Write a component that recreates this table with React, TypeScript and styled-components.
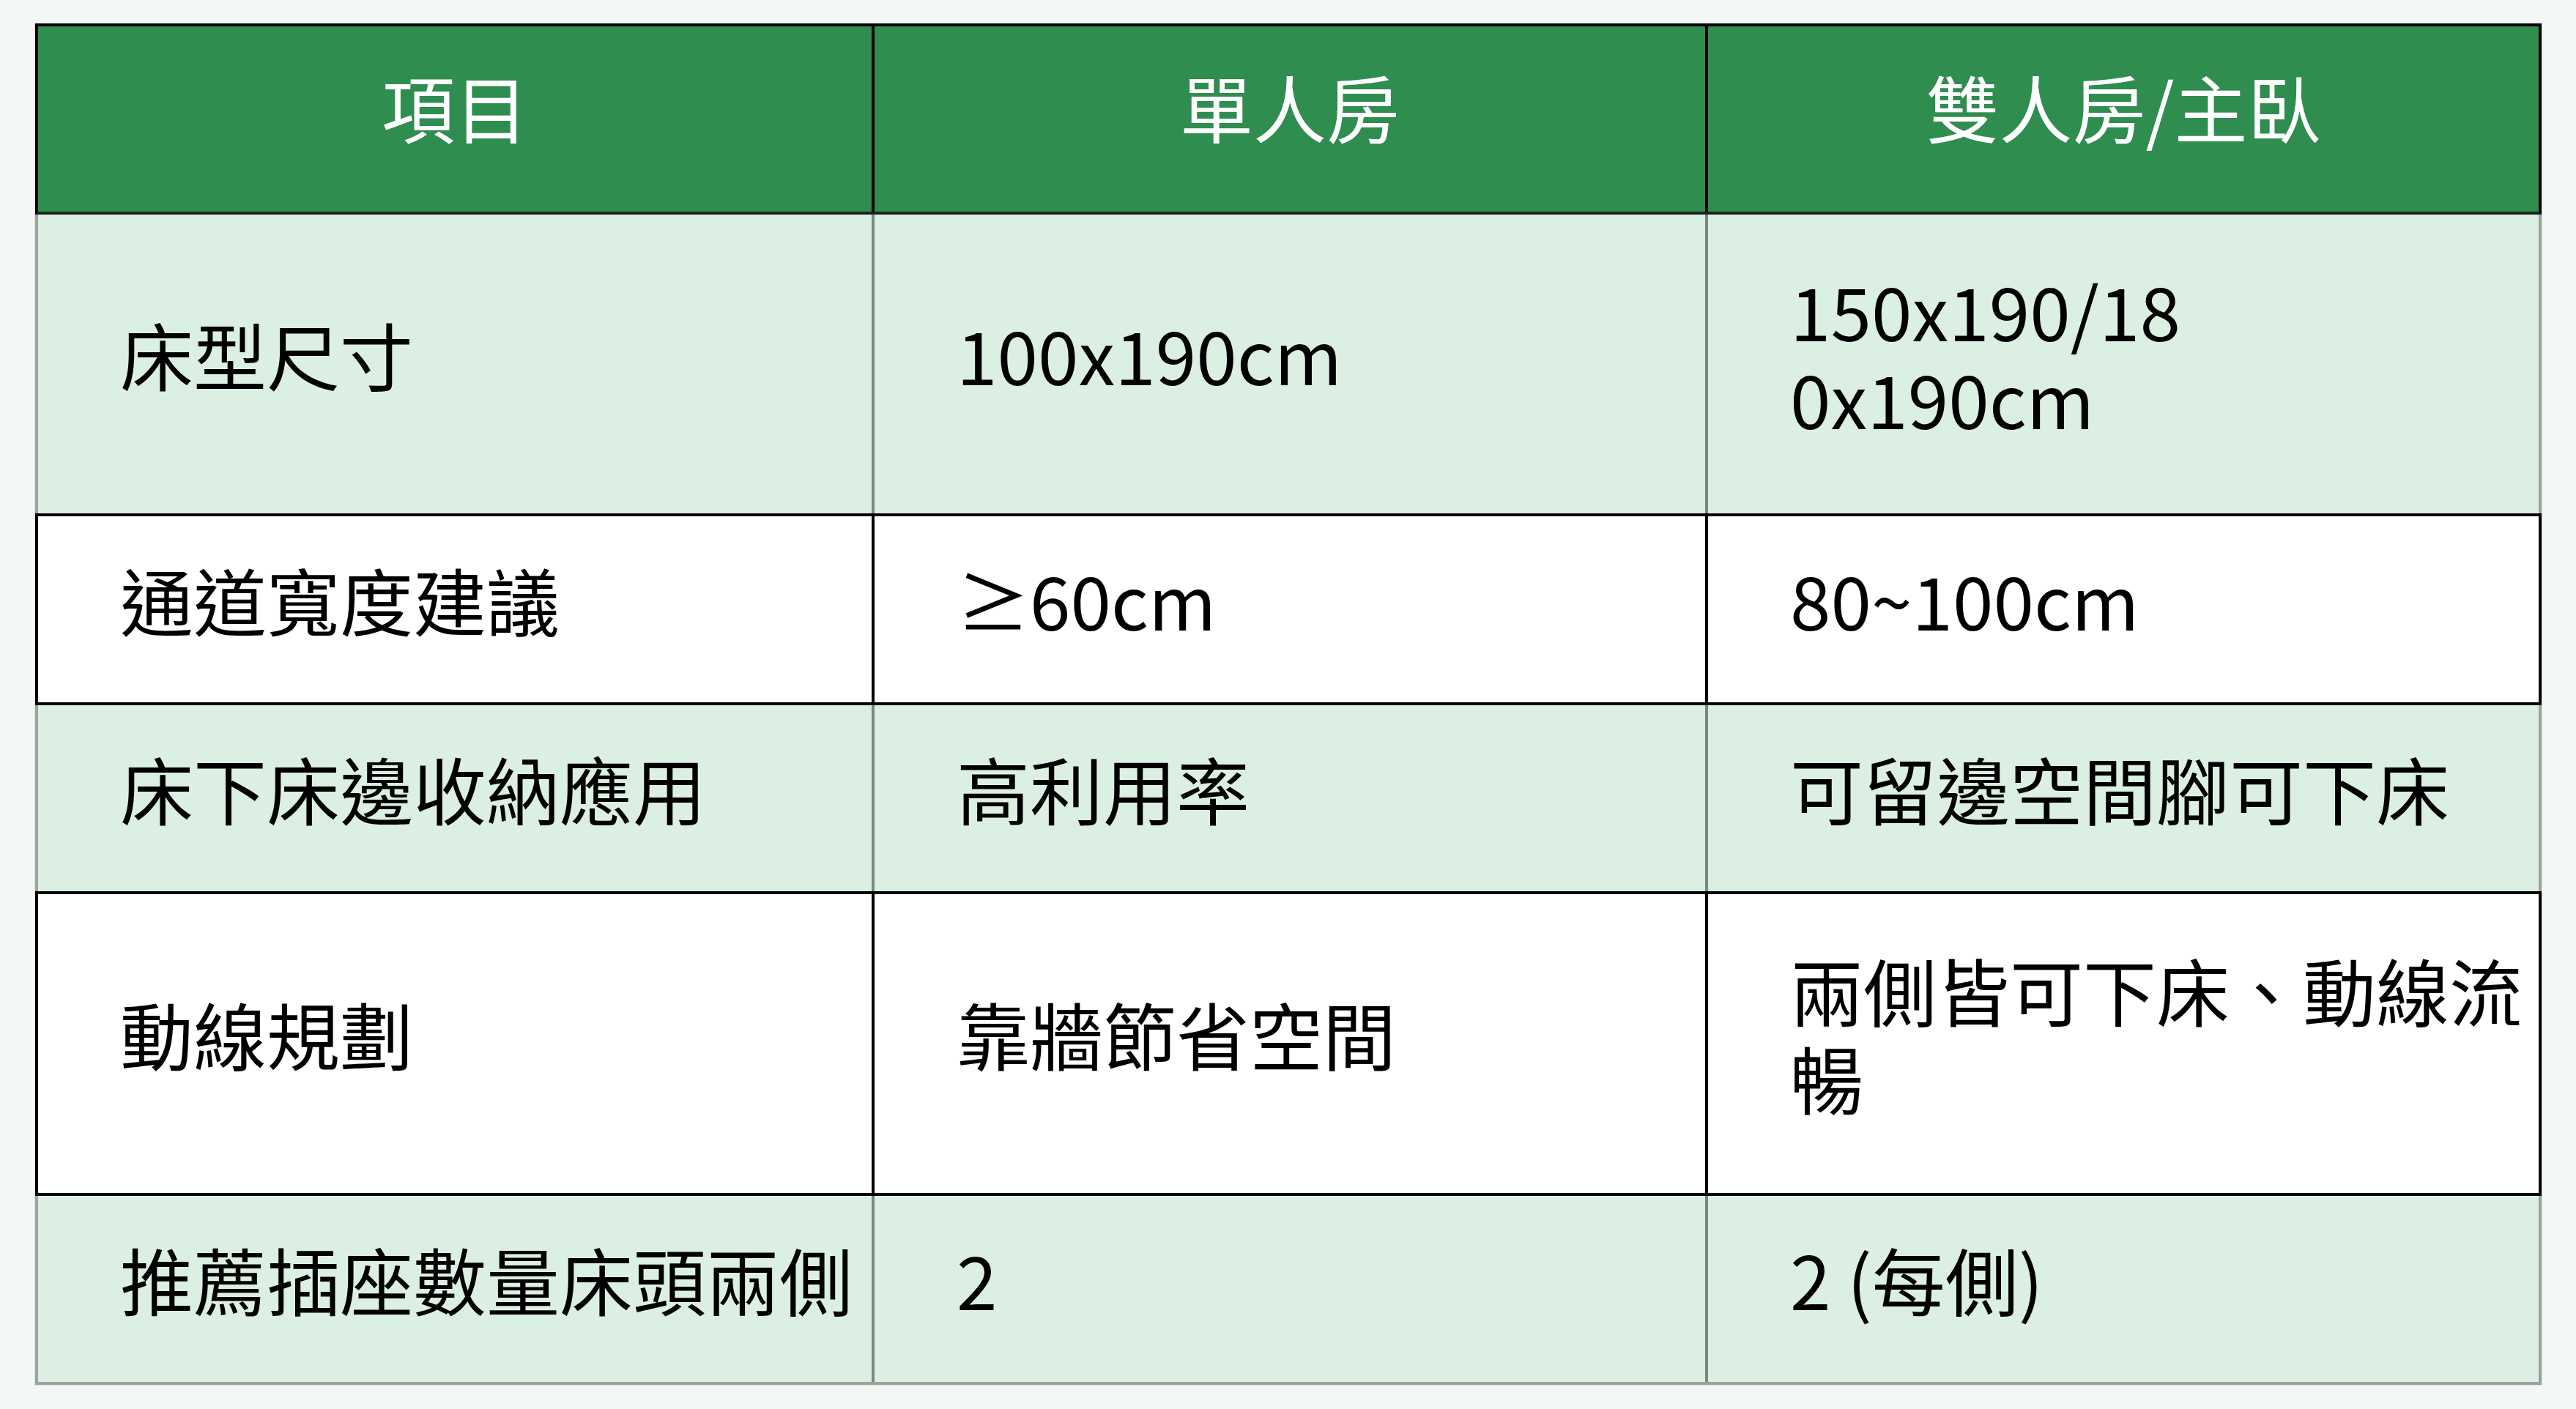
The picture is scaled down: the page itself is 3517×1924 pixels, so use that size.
import React from 'react';
import styled, { createGlobalStyle, css } from 'styled-components';

type Tone = 'head' | 'light' | 'white';

interface IRowData {
  tone: Tone;
  tall?: boolean;
  cells: React.ReactNode[];
}

const rows: IRowData[] = [
  { tone: 'light', tall: true, cells: ['床型尺寸', '100x190cm', <>150x190/18<br />0x190cm</>] },
  { tone: 'white', cells: ['通道寬度建議', '≥60cm', '80~100cm'] },
  { tone: 'light', cells: ['床下床邊收納應用', '高利用率', '可留邊空間腳可下床'] },
  { tone: 'white', tall: true, cells: ['動線規劃', '靠牆節省空間', '兩側皆可下床、動線流暢'] },
  { tone: 'light', cells: ['推薦插座數量床頭兩側', '2', '2 (每側)'] },
];

const GlobalStyle = createGlobalStyle`
  html, body {
    margin: 0;
    padding: 0;
    background: #f3f7f6;
  }
`;

const Page = styled.div`
  box-sizing: border-box;
  min-height: 1924px;
  padding: 32px 47px 32px 48px;
  background: #f3f7f6;
  font-family: 'Noto Sans CJK TC', 'Noto Sans', sans-serif;
  color: #000;
`;

const Table = styled.div`
  display: flex;
  flex-direction: column;
  box-shadow: 0 0 0 1px #dfe5e2;
`;

const Cell = styled.div`
  display: flex;
  align-items: center;
  padding: 0 8px 28px 112px;
  font-size: 100px;
  line-height: 120px;
`;

const HeadCell = styled(Cell)`
  justify-content: center;
  padding: 0 0 36px;
  color: #fff;
`;

const lineColor = (tone: Tone) => (tone === 'light' ? '#7b877f' : '#000');
const edgeColor = (tone: Tone) => (tone === 'light' ? '#9ba39f' : '#000');

const Row = styled.div<{ $tone: Tone; $tall?: boolean }>`
  display: grid;
  grid-template-columns: repeat(3, 1fr);
  min-height: ${({ $tall }) => ($tall ? 408 : 254)}px;
  background: ${({ $tone }) =>
    $tone === 'head' ? '#2e8d4f' : $tone === 'light' ? '#dbefe3' : '#fff'};
  border-left: 4px solid ${({ $tone }) => edgeColor($tone)};
  border-right: 4px solid ${({ $tone }) => edgeColor($tone)};

  ${({ $tone }) =>
    $tone === 'light'
      ? css`
          &:last-child {
            border-bottom: 4px solid #9ba39f;
          }
        `
      : css`
          border-top: 4px solid #000;
          border-bottom: 4px solid #000;
        `}

  ${Cell} + ${Cell} {
    border-left: 4px solid ${({ $tone }) => lineColor($tone)};
  }
`;

const HeadRow = styled(Row)`
  min-height: 253px;
  border-bottom-color: #17261c;
`;

export default function App() {
  return (
    <>
      <GlobalStyle />
      <Page>
        <Table>
          <HeadRow $tone="head">
            <HeadCell>項目</HeadCell>
            <HeadCell>單人房</HeadCell>
            <HeadCell>雙人房/主臥</HeadCell>
          </HeadRow>
          {rows.map((row, i) => (
            <Row key={i} $tone={row.tone} $tall={row.tall}>
              {row.cells.map((cell, j) => (
                <Cell key={j}>
                  <span>{cell}</span>
                </Cell>
              ))}
            </Row>
          ))}
        </Table>
      </Page>
    </>
  );
}
